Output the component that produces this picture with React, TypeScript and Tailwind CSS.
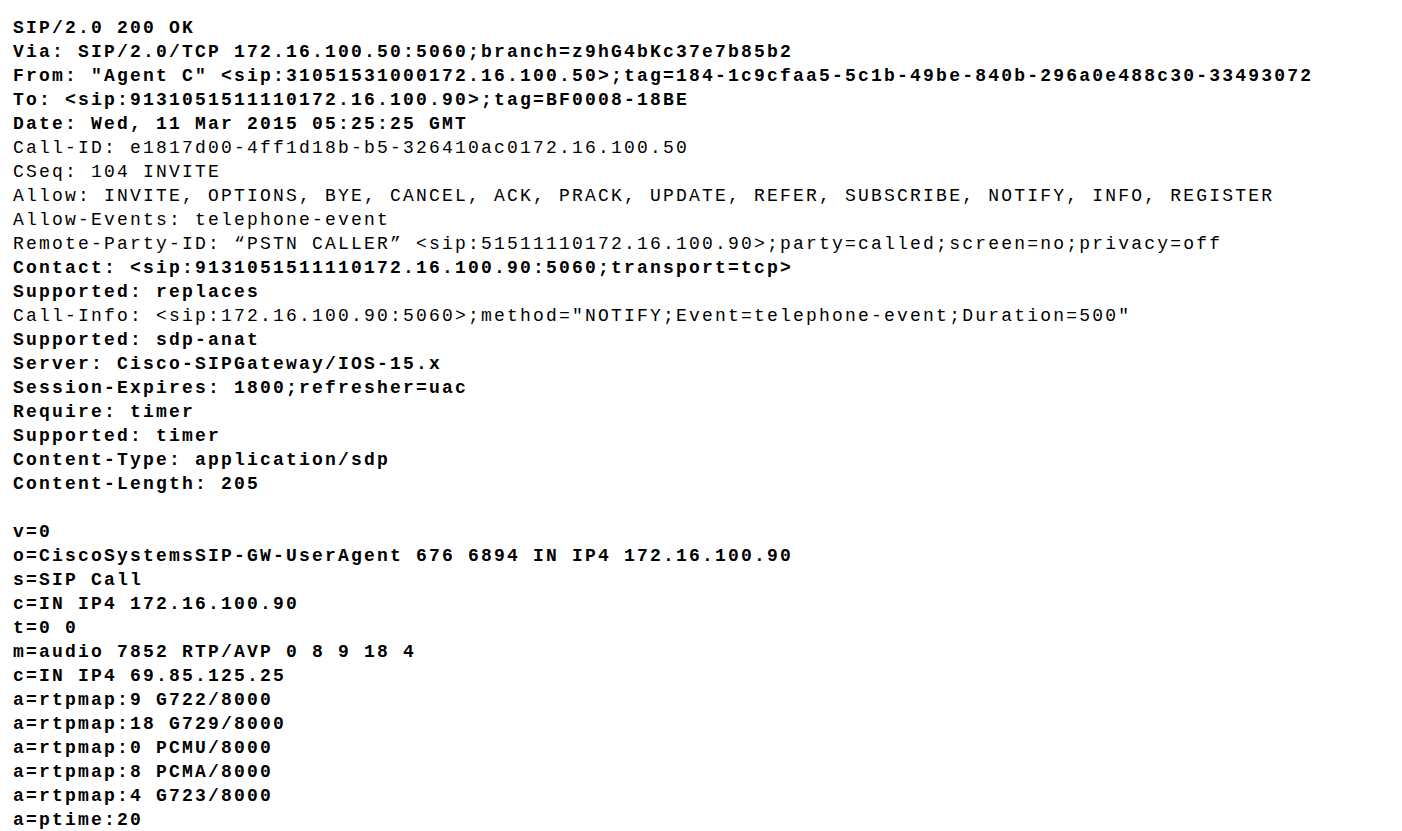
const lines: { text: string; light?: boolean }[] = [
  { text: "SIP/2.0 200 OK" },
  { text: "Via: SIP/2.0/TCP 172.16.100.50:5060;branch=z9hG4bKc37e7b85b2" },
  { text: 'From: "Agent C" <sip:31051531000172.16.100.50>;tag=184-1c9cfaa5-5c1b-49be-840b-296a0e488c30-33493072' },
  { text: "To: <sip:9131051511110172.16.100.90>;tag=BF0008-18BE" },
  { text: "Date: Wed, 11 Mar 2015 05:25:25 GMT" },
  { text: "Call-ID: e1817d00-4ff1d18b-b5-326410ac0172.16.100.50", light: true },
  { text: "CSeq: 104 INVITE", light: true },
  { text: "Allow: INVITE, OPTIONS, BYE, CANCEL, ACK, PRACK, UPDATE, REFER, SUBSCRIBE, NOTIFY, INFO, REGISTER", light: true },
  { text: "Allow-Events: telephone-event", light: true },
  { text: "Remote-Party-ID: \u201cPSTN CALLER\u201d <sip:51511110172.16.100.90>;party=called;screen=no;privacy=off", light: true },
  { text: "Contact: <sip:9131051511110172.16.100.90:5060;transport=tcp>" },
  { text: "Supported: replaces" },
  { text: 'Call-Info: <sip:172.16.100.90:5060>;method="NOTIFY;Event=telephone-event;Duration=500"', light: true },
  { text: "Supported: sdp-anat" },
  { text: "Server: Cisco-SIPGateway/IOS-15.x" },
  { text: "Session-Expires: 1800;refresher=uac" },
  { text: "Require: timer" },
  { text: "Supported: timer" },
  { text: "Content-Type: application/sdp" },
  { text: "Content-Length: 205" },
  { text: "" },
  { text: "v=0" },
  { text: "o=CiscoSystemsSIP-GW-UserAgent 676 6894 IN IP4 172.16.100.90" },
  { text: "s=SIP Call" },
  { text: "c=IN IP4 172.16.100.90" },
  { text: "t=0 0" },
  { text: "m=audio 7852 RTP/AVP 0 8 9 18 4" },
  { text: "c=IN IP4 69.85.125.25" },
  { text: "a=rtpmap:9 G722/8000" },
  { text: "a=rtpmap:18 G729/8000" },
  { text: "a=rtpmap:0 PCMU/8000" },
  { text: "a=rtpmap:8 PCMA/8000" },
  { text: "a=rtpmap:4 G723/8000" },
  { text: "a=ptime:20" },
];

export default function App() {
  return (
    <div className="min-h-screen w-full bg-white overflow-hidden">
      <div className="pl-[13px] pt-[16px] font-['Liberation_Mono',monospace] text-[18px] leading-[24px] tracking-[2.2px] text-black">
        {lines.map((l, i) => (
          <div
            key={i}
            className={`h-[24px] whitespace-pre ${l.light ? "font-normal" : "font-bold"}`}
          >
            {l.text}
          </div>
        ))}
      </div>
    </div>
  );
}
